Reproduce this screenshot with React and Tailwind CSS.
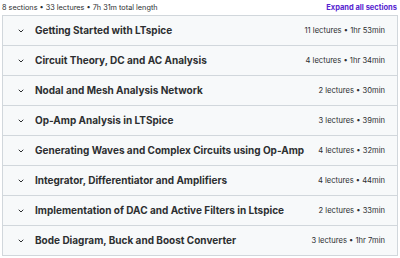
import React from 'react'

const sections = [
  { title: 'Getting Started with LTspice', info: '11 lectures • 1hr 53min' },
  { title: 'Circuit Theory, DC and AC Analysis', info: '4 lectures • 1hr 34min' },
  { title: 'Nodal and Mesh Analysis Network', info: '2 lectures • 30min' },
  { title: 'Op-Amp Analysis in LTSpice', info: '3 lectures • 39min' },
  { title: 'Generating Waves and Complex Circuits using Op-Amp', info: '4 lectures • 32min' },
  { title: 'Integrator, Differentiator and Amplifiers', info: '4 lectures • 44min' },
  { title: 'Implementation of DAC and Active Filters in Ltspice', info: '2 lectures • 33min' },
  { title: 'Bode Diagram, Buck and Boost Converter', info: '3 lectures • 1hr 7min' },
]

function Chevron() {
  return (
    <svg width="8" height="8" viewBox="0 0 24 24" fill="none" stroke="#2d2f31" strokeWidth="3" strokeLinecap="round" strokeLinejoin="round">
      <path d="M6 9l6 6 6-6" />
    </svg>
  )
}

export default function App() {
  return (
    <div className="w-[400px] h-[258px] bg-white px-[2px] pt-[1px] text-[#2d2f31] font-['Inter',sans-serif]">
      {/* Summary */}
      <div className="flex items-center justify-between h-[14px] pr-[1px]">
        <span className="text-[7.3px] text-[#2d2f31]">8 sections • 33 lectures • 7h 31m total length</span>
        <span className="text-[7.5px] font-bold text-[#5624d0]">Expand all sections</span>
      </div>

      {/* Curriculum */}
      <div className="w-[396px] border border-[#d1d7dc] border-b-0">
        {sections.map((s) => (
          <div key={s.title} className="flex items-center h-[30px] bg-[#f7f9fa] border-b border-[#d1d7dc] pl-[14px] pr-[12px]">
            <div className="w-[18px] flex items-center"><Chevron /></div>
            <span className="flex-1 text-[10px] font-bold truncate">{s.title}</span>
            <span className="text-[7.6px] text-[#2d2f31]">{s.info}</span>
          </div>
        ))}
      </div>
    </div>
  )
}
